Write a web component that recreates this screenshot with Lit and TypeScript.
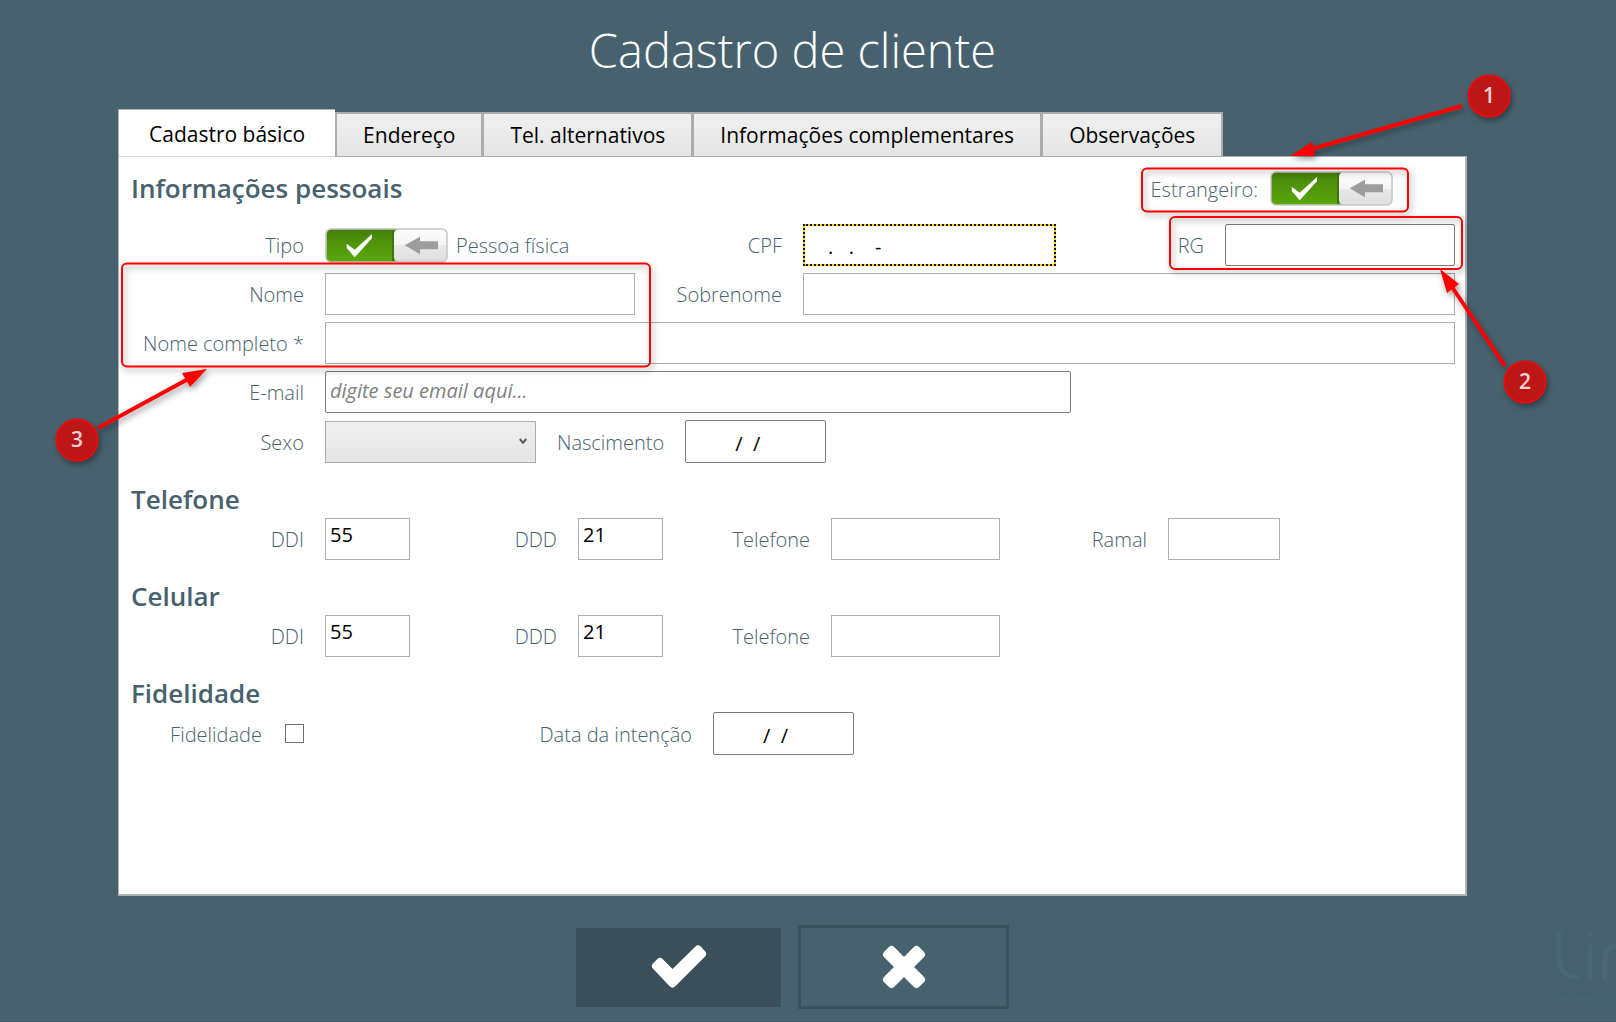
import { LitElement, html, svg, css } from "lit";
import { classMap } from "lit/directives/class-map.js";

const TABS = [
  "Cadastro básico",
  "Endereço",
  "Tel. alternativos",
  "Informações complementares",
  "Observações",
];

class ToggleSwitch extends LitElement {
  static properties = { label: {} };
  declare label: string;

  static styles = css`
    :host { display: inline-block; position: relative; }
    .input {
      position: absolute; inset: 0; width: 100%; height: 100%;
      margin: 0; opacity: 0; cursor: pointer;
    }
    .art { display: block; width: 123px; height: 35px; }
  `;

  render() {
    return html`
      <input class="input" type="checkbox" role="switch" checked aria-label=${this.label} />
      <svg class="art" viewBox="0 0 123 35" aria-hidden="true">
        <defs>
          <linearGradient id="on" x2="0" y2="1">
            <stop offset="0" stop-color="#437c0a" />
            <stop offset=".25" stop-color="#4b8d0a" />
            <stop offset="1" stop-color="#5ca80d" />
          </linearGradient>
          <linearGradient id="knob" x2="0" y2="1">
            <stop offset="0" stop-color="#fdfdfd" />
            <stop offset=".5" stop-color="#f4f4f4" />
            <stop offset=".5" stop-color="#e9e9e9" />
            <stop offset="1" stop-color="#dedede" />
          </linearGradient>
        </defs>
        <rect x="1" y="1" width="121" height="33" rx="5" fill="url(#on)" />
        <path d="M68 1.5V33.5" stroke="#3f7508" stroke-width="2" />
        <rect x="69" y="1" width="53" height="33" rx="5" fill="url(#knob)" />
        <rect x="1" y="1" width="121" height="33" rx="5" fill="none" stroke="#c6c6c6" stroke-width="1.5" />
        <path d="M21.7 15.7L29.7 21.7L47 6V10.3L29.7 29.3L21.7 20Z" fill="#fff" />
        <path d="M79.7 17.3L95 8.7V13.3H113V21.3H95V26.3Z" fill="#9d9d9d" />
      </svg>
    `;
  }
}
customElements.define("toggle-switch", ToggleSwitch);

class AppRoot extends LitElement {
  static properties = { active: { state: true } };
  declare active: number;

  constructor() {
    super();
    this.active = 0;
  }

  static styles = css`
    :host { display: block; font-family: "Open Sans", "Noto Sans", sans-serif; }
    * { box-sizing: border-box; }
    .page {
      position: relative; overflow: hidden;
      display: flex; flex-direction: column;
      min-height: 100vh; padding: 0 149px 12px 118px;
      background: #47626e; border-bottom: 1px solid #3e5868;
    }
    .title {
      margin: 0; height: 109px; padding-top: 18px;
      color: #fff; text-align: center;
      font-size: 47px; font-weight: 300; line-height: 64px;
    }
    .tabs { display: flex; align-items: flex-end; position: relative; margin-bottom: -1px; }
    .tab {
      height: 45px; padding: 0 26px; border: 1px solid #acacac;
      border-width: 2px 1px 1px 2px;
      background: linear-gradient(#f0f0f0, #e5e5e5);
      color: #000; font: 400 21px/24px "Open Sans", "Noto Sans", sans-serif;
      white-space: nowrap;
    }
    .tab:last-child { border-right-width: 2px; }
    .tab.on {
      height: 48px; padding: 0 30px; border-color: #acb4b8 #acb4b8 #fff;
      border-width: 1px 0 0 1px; background: #fff;
      box-shadow: inset 0 -1px #d5d8da;
    }
    .panel {
      flex: 1; padding: 14px 10px 20px 12px;
      background: #fff; border: 1px solid #acb4b8; border-width: 1px 2px 2px 1px;
    }
    .group { margin: 0 0 19px; }
    .head { display: flex; justify-content: space-between; height: 36px; }
    .head.first { height: 53px; }
    .heading { margin: 0; color: #47616d; font-size: 26px; font-weight: 600; line-height: 34px; }
    .foreign { display: flex; gap: 12px; align-items: flex-start; margin-right: 62px; }
    .label {
      padding-top: 2px; color: #47616d;
      font-size: 20px; font-weight: 300; line-height: 34px; white-space: nowrap;
    }
    .rows { display: grid; row-gap: 7px; column-gap: 21px; grid-auto-rows: minmax(42px, auto); align-items: center; }
    .personal { grid-template-columns: 173px minmax(0, 310fr) 126px minmax(0, 253fr) 127px minmax(0, 230fr); }
    .phone { grid-template-columns: 173px 85px 126px 85px 126px 169px 126px 112px; }
    .loyalty { grid-template-columns: 131px 21px 367px 141px; }
    .rows > .label { text-align: right; }
    .wide { grid-column: 2 / -1; }
    .name2 { grid-column: 4 / -1; }
    .line { display: flex; align-items: center; gap: 21px; }
    .kind { gap: 8px; }
    .box {
      width: 100%; height: 42px; padding: 0 4px;
      border: 1px solid #abadb3; border-radius: 0; background: #fff; outline: none;
      color: #000; font: 400 20px/24px "Open Sans", "Noto Sans", sans-serif;
    }
    .value { padding-bottom: 10px; }
    .strong { border-color: #7c7c7c; border-radius: 2px; }
    .mail { width: 66%; padding-bottom: 3px; }
    .mail::placeholder { color: #808080; font-style: italic; font-weight: 400; opacity: 1; }
    .date { width: 141px; height: 43px; padding: 4px 4px 0 49px; }
    .cpf {
      padding: 2px 4px 0 23px; border: 2px dotted #111;
      background: linear-gradient(#fff, #fff) padding-box, #ffc91e border-box;
    }
    .pick { position: relative; width: 211px; height: 42px; }
    .select {
      appearance: none; width: 100%; height: 42px; border: 1px solid #acacac; border-radius: 0;
      background: linear-gradient(#f0f0f0, #e5e5e5);
      font: 400 20px/24px "Open Sans", "Noto Sans", sans-serif;
    }
    .chevron { position: absolute; right: 9px; top: 17px; width: 8px; height: 7px; pointer-events: none; }
    .check {
      appearance: none; justify-self: end; width: 19px; height: 19px; margin: 0;
      border: 1px solid #707070; background: #fff;
    }
    .actions { display: flex; justify-content: center; align-items: center; gap: 17px; padding-top: 29px; }
    .action { display: grid; place-items: center; padding: 0; border: 0; cursor: pointer; }
    .ok { width: 205px; height: 79px; background: #3a4f5a; }
    .cancel { width: 211px; height: 84px; background: none; border: 3px solid #3a505b; }
    .glyph { width: 56px; height: 44px; fill: none; stroke: #fff; stroke-linejoin: round; }
    .notes { position: absolute; left: 0; top: 0; width: 1616px; height: 1022px; pointer-events: none; }
    .num { fill: #f3d3d6; font: 600 21px "Open Sans", sans-serif; text-anchor: middle; }
    .brand { position: absolute; left: 1555px; bottom: 14px; width: 61px; height: 80px; }
    .slogan { fill: #4c6874; font: 400 8px "Roboto", sans-serif; }
  `;

  private field(id: string, label: string, cls = "", value = "") {
    return html`
      <label class="label" for=${id}>${label}</label>
      <input class="box ${cls}" id=${id} type="text" .value=${value} />
    `;
  }

  private badge(n: number, x: number, y: number) {
    return svg`
      <g filter="url(#drop)">
        <circle cx=${x} cy=${y} r="20.5" fill="#bd1217" stroke="#e8090d" stroke-width="2" />
      </g>
      <text class="num" x=${x} y=${y + 7}>${n}</text>`;
  }

  private notes() {
    return html`
      <svg class="notes" viewBox="0 0 1616 1022" aria-hidden="true">
        <defs>
          <filter id="drop" filterUnits="userSpaceOnUse" x="0" y="0" width="1616" height="1022">
            <feDropShadow dx="2" dy="3" stdDeviation="3" flood-color="#000" flood-opacity=".4" />
          </filter>
        </defs>
        <g filter="url(#drop)" fill="none" stroke="#f00" stroke-width="2">
          <rect x="1142" y="168.5" width="266" height="43" rx="5" />
          <rect x="1170" y="217" width="292" height="52" rx="5" />
          <rect x="122" y="263.5" width="528" height="103" rx="5" />
        </g>
        <g filter="url(#drop)" fill="#f00" stroke="#f00">
          <path d="M1462 106L1308 150" stroke-width="4" />
          <path d="M1290 156L1312 142L1315 156Z" stroke="none" />
          <path d="M1505 366L1450 284" stroke-width="4" />
          <path d="M1440 269L1459 284L1447 293Z" stroke="none" />
          <path d="M98 428L190 378" stroke-width="4" />
          <path d="M207 369L182 373L190 387Z" stroke="none" />
        </g>
        ${this.badge(1, 1489, 96)} ${this.badge(2, 1525, 382)} ${this.badge(3, 77, 440)}
      </svg>
    `;
  }

  render() {
    return html`
      <main class="page">
        <h1 class="title">Cadastro de cliente</h1>
        <nav class="tabs" role="tablist">
          ${TABS.map(
            (t, i) => html`<button
              type="button" role="tab" aria-selected=${i === this.active}
              class=${classMap({ tab: true, on: i === this.active })}
              @click=${() => (this.active = i)}
            >${t}</button>`
          )}
        </nav>

        <form class="panel">
          <section class="group">
            <div class="head first">
              <h2 class="heading">Informações pessoais</h2>
              <div class="foreign">
                <span class="label">Estrangeiro:</span>
                <toggle-switch label="Estrangeiro"></toggle-switch>
              </div>
            </div>
            <div class="rows personal">
              <span class="label">Tipo</span>
              <div class="line kind">
                <toggle-switch label="Tipo"></toggle-switch>
                <span class="label">Pessoa física</span>
              </div>
              ${this.field("cpf", "CPF", "cpf", ".   .    -")}
              <label class="label" for="rg">RG</label>
              <input class="box strong" id="rg" type="text" />
              ${this.field("nome", "Nome")}
              ${this.field("sobrenome", "Sobrenome", "name2")}
              ${this.field("completo", "Nome completo *", "wide")}
              <label class="label" for="email">E-mail</label>
              <div class="wide line">
                <input class="box strong mail" id="email" type="email" placeholder="digite seu email aqui..." />
              </div>
              <label class="label" for="sexo">Sexo</label>
              <div class="wide line">
                <div class="pick">
                  <select class="select" id="sexo"><option></option></select>
                  <svg class="chevron" viewBox="0 0 8 7" aria-hidden="true">
                    <path d="M0.8 1L4 4.8L7.2 1" fill="none" stroke="#555" stroke-width="2" />
                  </svg>
                </div>
                ${this.field("nasc", "Nascimento", "strong date", "/  /")}
              </div>
            </div>
          </section>

          <section class="group">
            <div class="head"><h2 class="heading">Telefone</h2></div>
            <div class="rows phone">
              ${this.field("tddi", "DDI", "value", "55")} ${this.field("tddd", "DDD", "value", "21")}
              ${this.field("tel", "Telefone")} ${this.field("ramal", "Ramal")}
            </div>
          </section>

          <section class="group">
            <div class="head"><h2 class="heading">Celular</h2></div>
            <div class="rows phone">
              ${this.field("cddi", "DDI", "value", "55")} ${this.field("cddd", "DDD", "value", "21")}
              ${this.field("cel", "Telefone")}
            </div>
          </section>

          <section class="group">
            <div class="head"><h2 class="heading">Fidelidade</h2></div>
            <div class="rows loyalty">
              <label class="label" for="fid">Fidelidade</label>
              <input class="check" id="fid" type="checkbox" />
              ${this.field("intencao", "Data da intenção", "strong date", "/  /")}
            </div>
          </section>
        </form>

        <div class="actions">
          <button class="action ok" type="button" aria-label="Confirmar">
            <svg class="glyph" viewBox="0 0 56 44" aria-hidden="true">
              <path d="M5 21L9 17L21.5 29.5L47 4.5L51 9L21.5 38.5Z" fill="#fff" stroke-width="8" />
            </svg>
          </button>
          <button class="action cancel" type="button" aria-label="Cancelar">
            <svg class="glyph" viewBox="0 0 56 44" aria-hidden="true">
              <path d="M15.5 5L28 17.5L40.5 5L45 9.5L32.5 22L45 34.5L40.5 39L28 26.5L15.5 39L11 34.5L23.5 22L11 9.5Z" fill="#fff" stroke-width="8" />
            </svg>
          </button>
        </div>

        <svg class="brand" viewBox="0 0 61 80" aria-hidden="true">
          <g fill="none" stroke="#4c6874" stroke-width="5" stroke-linecap="round">
            <path d="M4 7V30Q4 50 22 50M35 20V50M50 50V32Q50 18 66 18" />
            <path d="M35 7.5V8" />
          </g>
          <text class="slogan" x="1" y="74">SOFTWARE QUE</text>
        </svg>
        ${this.notes()}
      </main>
    `;
  }
}
customElements.define("app-root", AppRoot);
